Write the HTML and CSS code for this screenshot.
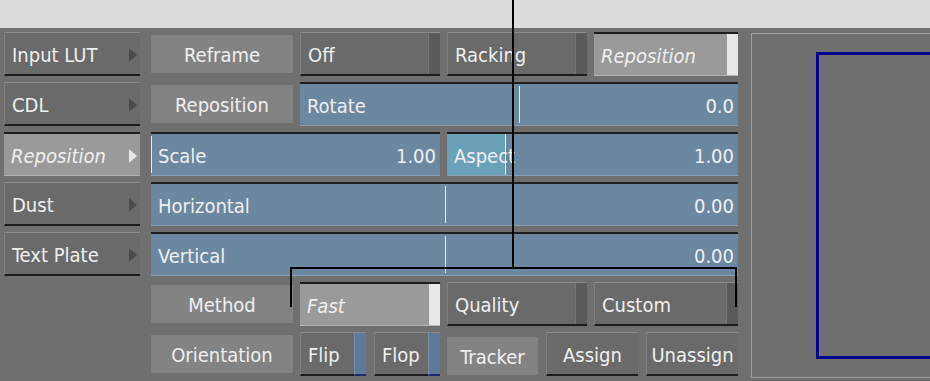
FILE: index.html
```html
<!DOCTYPE html>
<html lang="en">
<head>
  <meta charset="UTF-8" />
  <title>Reposition</title>
  <link rel="stylesheet" href="styles.css">
</head>
<body>
  <div class="topbar"></div>

  <div class="panel">
    <div class="controls">
      <!-- row 1 -->
      <div class="btn nav">Input LUT</div>
      <div class="label">Reframe</div>
      <div class="btn drop">Off</div>
      <div class="btn drop">Racking</div>
      <div class="btn drop on">Reposition</div>

      <!-- row 2 -->
      <div class="btn nav">CDL</div>
      <div class="label">Reposition</div>
      <div class="slider span3">
        <span class="marker" style="left: 50%"></span>
        <span class="txt">Rotate</span><span class="txt">0.0</span>
      </div>

      <!-- row 3 -->
      <div class="btn nav on">Reposition</div>
      <div class="slider span2">
        <span class="marker" style="left: 0%"></span>
        <span class="txt">Scale</span><span class="txt">1.00</span>
      </div>
      <div class="slider span2">
        <span class="fill" style="width: 20%"></span>
        <span class="txt">Aspect</span><span class="txt">1.00</span>
      </div>

      <!-- row 4 -->
      <div class="btn nav">Dust</div>
      <div class="slider span4">
        <span class="marker" style="left: 50%"></span>
        <span class="txt">Horizontal</span><span class="txt">0.00</span>
      </div>

      <!-- row 5 -->
      <div class="btn nav">Text Plate</div>
      <div class="slider span4">
        <span class="marker" style="left: 50%"></span>
        <span class="txt">Vertical</span><span class="txt">0.00</span>
      </div>

      <!-- row 6 -->
      <div class="label col2">Method</div>
      <div class="btn drop on">Fast</div>
      <div class="btn drop">Quality</div>
      <div class="btn drop">Custom</div>

      <!-- row 7 -->
      <div class="label col2">Orientation</div>
      <div class="pair">
        <div class="btn toggle">Flip</div>
        <div class="btn toggle">Flop</div>
      </div>
      <div class="trio span2">
        <div class="label">Tracker</div>
        <div class="btn center">Assign</div>
        <div class="btn center">Unassign</div>
      </div>
    </div>

    <div class="viewer">
      <div class="frame"></div>
    </div>
  </div>

  <svg class="callout" width="930" height="381" viewBox="0 0 930 381">
    <path d="M513 0 V268" stroke="#000" stroke-width="2" fill="none"/>
    <path d="M291 307 V268 H736 V307" stroke="#000" stroke-width="2" fill="none"/>
  </svg>
</body>
</html>
```

FILE: styles.css
```css
body {
  margin: 0;
  overflow: hidden;
  background-color: #6f6f6f;
  font-family: "DejaVu Sans Condensed", "DejaVu Sans", sans-serif;
  font-size: 20px;
  color: #f0f0f0;
}

.topbar {
  height: 28px;
  background-color: #dcdcdc;
}

.panel {
  display: flex;
  padding: 4px 0 0 4px;
}

.controls {
  display: grid;
  grid-template-columns: 140px 142px 140px 140px 144px;
  grid-auto-rows: 44px;
  column-gap: 7px;
  row-gap: 6px;
}

.span2 { grid-column: span 2; }
.span3 { grid-column: span 3; }
.span4 { grid-column: span 4; }
.col2 { grid-column: 2; }

/* raised button */
.btn {
  box-sizing: border-box;
  display: flex;
  align-items: center;
  padding: 2px 0 0 7px;
  background-color: #6a6a6a;
  border-top: 1px solid #8c8c8c;
  border-left: 1px solid #7f7f7f;
  border-bottom: 2px solid #1c1c1c;
  white-space: nowrap;
}

.btn.on {
  background-color: #9a9a9a;
  border-top: 2px solid #1c1c1c;
  border-left: none;
  border-bottom: 1px solid #b4b4b4;
  font-style: italic;
}

.nav {
  width: 136px;
}

.nav::after {
  content: "";
  margin-left: auto;
  margin-right: 3px;
  border-left: 8px solid #4b4b4b;
  border-top: 7px solid transparent;
  border-bottom: 7px solid transparent;
}

.nav.on::after {
  border-left-color: #e6e6e6;
}

.drop::after,
.toggle::after {
  content: "";
  align-self: stretch;
  margin-top: -2px;
  margin-left: auto;
  width: 11px;
  background-color: #5a5a5a;
  border-left: 1px solid #767676;
}

.drop.on::after {
  background-color: #e8e8e8;
  border-left: none;
}

.toggle::after {
  background-color: #5d7a9b;
  border-left: 1px solid #7890aa;
  border-bottom: 2px solid #1e2a70;
  margin-bottom: -2px;
}

.center {
  justify-content: center;
  padding-left: 0;
}

/* flat label */
.label {
  display: flex;
  align-items: center;
  justify-content: center;
  margin: 3px 0;
  padding-top: 2px;
  background-color: #838383;
  white-space: nowrap;
}

/* value slider */
.slider {
  box-sizing: border-box;
  position: relative;
  display: flex;
  align-items: center;
  justify-content: space-between;
  padding: 2px 4px 0 7px;
  background-color: #6c87a0;
  border-top: 2px solid #1e1e1e;
  border-bottom: 1px solid #8aa0b4;
}

.slider .txt {
  position: relative;
}

.marker {
  position: absolute;
  top: 2px;
  bottom: 2px;
  width: 1px;
  background-color: #e6edf3;
}

.fill {
  position: absolute;
  left: 0;
  top: 0;
  bottom: 0;
  background-color: #6aa0b8;
  border-right: 1px solid #e6edf3;
}

.pair,
.trio {
  display: flex;
  gap: 8px;
}

.pair .btn,
.trio > * {
  flex: 1;
}

.trio .label {
  margin: 5px 0 1px;
}

.viewer {
  box-sizing: border-box;
  flex: 1;
  height: 345px;
  margin: 1px -20px 0 13px;
  padding: 18px 0 0 64px;
  border: 1px solid #a2a2a2;
}

.frame {
  box-sizing: border-box;
  height: 307px;
  border: 3px solid #00008c;
  border-right: none;
}

.callout {
  position: absolute;
  top: 0;
  left: 0;
  pointer-events: none;
}
```
